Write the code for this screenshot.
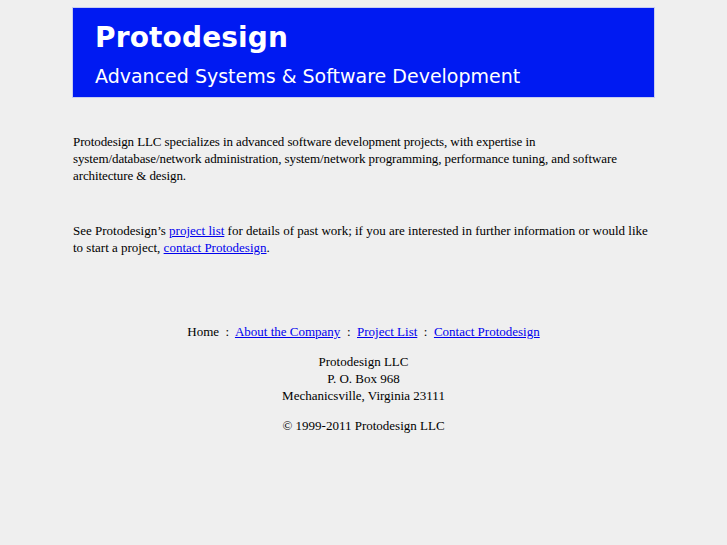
export default function App() {
  return (
    <div className="min-h-[545px] bg-[#efefef] pt-[7px]" style={{ fontFamily: '"Liberation Serif", serif' }}>
      <div className="w-[583px] ml-[72px]">
        {/* Banner */}
        <div className="bg-[#001af2] border border-[#c8cdf0] h-[91px] pl-[22px] pt-[13px] text-white" style={{ fontFamily: '"DejaVu Sans", Verdana, sans-serif' }}>
          <div className="text-[28px] font-bold leading-[34px] tracking-[0.15px]">Protodesign</div>
          <div className="text-[19px] leading-[24px] mt-[9px]">Advanced Systems &amp; Software Development</div>
        </div>

        {/* Intro */}
        <div className="px-[1px] pt-[35px] text-[13px] leading-[17px] text-black">
          <p className="tracking-[-0.1px]">
            Protodesign LLC specializes in advanced software development projects, with expertise in
            system/database/network administration, system/network programming, performance tuning, and software
            architecture &amp; design.
          </p>
          <p className="mt-[38px]">
            See Protodesign&rsquo;s <a href="#" className="text-[#0000ee] underline">project list</a> for details of past work; if you are interested in further information or would like
            to start a project, <a href="#" className="text-[#0000ee] underline">contact Protodesign</a>.
          </p>
        </div>

        {/* Footer */}
        <div className="mt-[67px] text-center text-[13px] leading-[17px] text-black">
          <div>
            Home &nbsp;:&nbsp; <a href="#" className="text-[#0000ee] underline">About the Company</a> &nbsp;:&nbsp;{' '}
            <a href="#" className="text-[#0000ee] underline">Project List</a> &nbsp;:&nbsp;{' '}
            <a href="#" className="text-[#0000ee] underline">Contact Protodesign</a>
          </div>
          <div className="mt-[13px]">
            <div>Protodesign LLC</div>
            <div>P. O. Box 968</div>
            <div>Mechanicsville, Virginia 23111</div>
          </div>
          <div className="mt-[13px]">&copy; 1999-2011 Protodesign LLC</div>
        </div>
      </div>
    </div>
  )
}
